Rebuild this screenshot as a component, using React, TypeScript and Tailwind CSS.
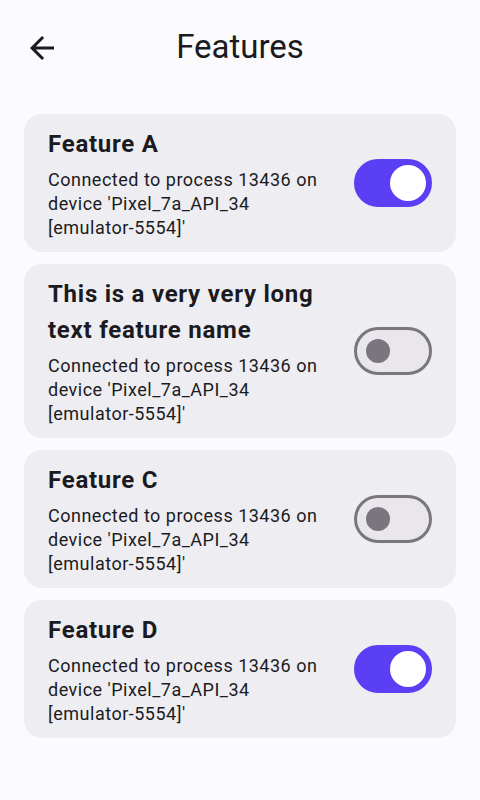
import React, { useState } from "react";

interface Feature {
  id: string;
  name: string;
  enabled: boolean;
}

const DESCRIPTION = "Connected to process 13436 on device 'Pixel_7a_API_34 [emulator-5554]'";

const initialFeatures: Feature[] = [
  { id: "a", name: "Feature A", enabled: true },
  { id: "b", name: "This is a very very long text feature name", enabled: false },
  { id: "c", name: "Feature C", enabled: false },
  { id: "d", name: "Feature D", enabled: true },
];

function Toggle({ checked, onChange }: { checked: boolean; onChange: () => void }) {
  return (
    <button
      type="button"
      role="switch"
      aria-checked={checked}
      onClick={onChange}
      className={`flex-shrink-0 w-[78px] h-[48px] rounded-full flex items-center border-[3px] transition ${
        checked ? "bg-[#5b3ff5] border-[#5b3ff5] justify-end pr-[3px]" : "bg-[#e9e7ec] border-[#79767f] justify-start pl-[9px]"
      }`}
    >
      <span
        className={`block rounded-full ${
          checked ? "w-[36px] h-[36px] bg-white" : "w-[24px] h-[24px] bg-[#79767f]"
        }`}
      />
    </button>
  );
}

export default function App() {
  const [features, setFeatures] = useState(initialFeatures);

  const toggle = (id: string) =>
    setFeatures((list) => list.map((f) => (f.id === id ? { ...f, enabled: !f.enabled } : f)));

  return (
    <div className="min-h-[800px] w-full bg-[#fbfafd] text-[#1b1b1f] font-['Roboto','Liberation_Sans',sans-serif]">
      {/* Top bar */}
      <div className="relative h-[96px] flex items-center justify-center">
        <button type="button" className="absolute left-[24px] top-[30px] w-[36px] h-[36px]" aria-label="Back">
          <svg viewBox="0 0 24 24" className="w-[36px] h-[36px]" fill="#1b1b1f">
            <path d="M20 11H7.83l5.59-5.59L12 4l-8 8 8 8 1.41-1.41L7.83 13H20v-2z" />
          </svg>
        </button>
        <h1 className="text-[33px] leading-[40px] font-normal -mt-[2px]">Features</h1>
      </div>

      {/* Feature list */}
      <div className="flex flex-col gap-3 px-6 pt-[18px]">
        {features.map((f) => (
          <div key={f.id} className="bg-[#eeedf1] rounded-[18px] px-6 py-3 flex items-center gap-4">
            <div className="flex-1 min-w-0 pr-[2px]">
              <h3 className="text-[24px] leading-[36px] font-bold tracking-[0.75px]">{f.name}</h3>
              <p className="mt-1.5 text-[18px] leading-[24px] tracking-[0.5px] text-[#1b1b1f]">{DESCRIPTION}</p>
            </div>
            <Toggle checked={f.enabled} onChange={() => toggle(f.id)} />
          </div>
        ))}
      </div>
    </div>
  );
}
